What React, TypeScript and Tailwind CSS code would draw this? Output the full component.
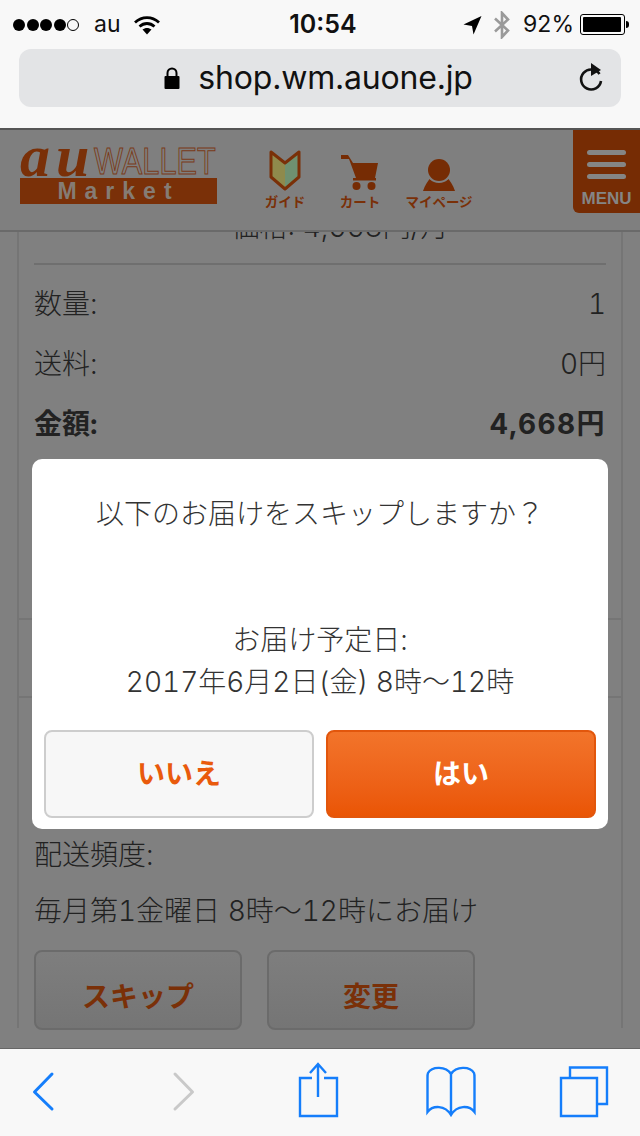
const jp = "font-['Inter','Noto_Sans_CJK_JP',sans-serif] font-light tabular-nums";

const StatusBar = () => (
  <div className="h-[48px] flex items-center justify-between pl-[13px] pr-[11px] pt-[1px] font-['Inter',sans-serif] text-[#111] text-[23px]">
    <div className="flex items-center w-[200px]">
      <div className="flex gap-[1.5px] items-center">
        <span className="w-[12px] h-[12px] rounded-full bg-black" />
        <span className="w-[12px] h-[12px] rounded-full bg-black" />
        <span className="w-[12px] h-[12px] rounded-full bg-black" />
        <span className="w-[12px] h-[12px] rounded-full bg-black" />
        <span className="w-[12px] h-[12px] rounded-full border border-black" />
      </div>
      <span className="ml-[15px]">au</span>
      <svg width="28" height="22" viewBox="0 0 28 22" className="ml-[12px]">
        <path d="M2 8.5 C9 2 19 2 26 8.5" fill="none" stroke="#000" strokeWidth="2.8" />
        <path d="M6.5 12.5 C11 8.5 17 8.5 21.5 12.5" fill="none" stroke="#000" strokeWidth="2.8" />
        <path d="M9.5 15.5 C12 13.4 16 13.4 18.5 15.5 L14 20.5 Z" fill="#000" />
      </svg>
    </div>
    <span className="font-semibold text-[25px] ml-[4px]">10:54</span>
    <div className="flex items-center justify-end w-[200px]">
      <svg width="19" height="20" viewBox="0 0 19 20">
        <path d="M18.5 1 L0.5 9.5 L9 11 L10.5 19.5 Z" fill="#000" />
      </svg>
      <svg width="18" height="28" viewBox="0 0 18 28" className="ml-[11px]">
        <path d="M2 7.5 L15 19.5 L9 26 V2 L15 8.5 L2 20.5" fill="none" stroke="#9a9a9a" strokeWidth="2.6" />
      </svg>
      <span className="ml-[12px]">92%</span>
      <div className="ml-[6px] w-[45px] h-[21px] rounded-[3px] border border-black p-[2px]">
        <div className="h-full w-[38px] bg-black rounded-[1px]" />
      </div>
      <span className="ml-[1px] w-[3px] h-[7px] bg-black rounded-r-sm" />
    </div>
  </div>
);

const UrlBar = () => (
  <div className="h-[80px] pt-[1px] px-[19px]">
    <div className="relative h-[58px] rounded-[12px] bg-[#e3e4e6] flex items-center justify-center">
      <div className="flex items-center gap-[18px] -ml-[3px] font-['Inter',sans-serif] text-[32px] text-[#111]">
        <svg width="16" height="22" viewBox="0 0 16 22">
          <path d="M3.5 9 V6 a4.5 4.5 0 0 1 9 0 V9" fill="none" stroke="#000" strokeWidth="2" />
          <rect x="0.5" y="9" width="15" height="13" rx="1" fill="#000" />
        </svg>
        <span className="tracking-[-0.2px]">shop.wm.auone.jp</span>
      </div>
      <svg width="28" height="32" viewBox="0 0 28 32" className="absolute right-[16px] top-[13px]">
        <path d="M22.5 11 A10 10 0 1 0 24 18" fill="none" stroke="#111" strokeWidth="2.6" transform="translate(0 1)" />
        <path d="M14 1 L24 8 L14 14 Z" fill="#111" />
      </svg>
    </div>
  </div>
);

const BeginnerMark = () => (
  <svg width="32" height="42" viewBox="0 0 32 42">
    <defs>
      <linearGradient id="mark" x1="0" x2="1" y1="0" y2="0">
        <stop offset="0" stopColor="#8f8a4c" />
        <stop offset="0.5" stopColor="#8f8a4c" />
        <stop offset="0.5" stopColor="#6f9070" />
        <stop offset="1" stopColor="#6f9070" />
      </linearGradient>
    </defs>
    <path d="M2 3 L16 14 L30 3 V28 L16 40 L2 28 Z" fill="url(#mark)" stroke="#7a3008" strokeWidth="3" strokeLinejoin="round" />
  </svg>
);

const CartIcon = () => (
  <svg width="38" height="36" viewBox="0 0 38 36">
    <path d="M0 0 H7 L12 8 H37 L34 23 H15 L8 4 H0 Z" fill="#762c04" />
    <rect x="12" y="23" width="23" height="2.5" fill="#762c04" />
    <circle cx="15.5" cy="31" r="4" fill="#762c04" />
    <circle cx="30.5" cy="31" r="4" fill="#762c04" />
  </svg>
);

const PersonIcon = () => (
  <svg width="32" height="32" viewBox="0 0 32 32">
    <path d="M0 32 C2 26 5 21 9 18 H23 C27 21 30 26 32 32 Z" fill="#762c04" />
    <circle cx="16" cy="11" r="13" fill="#808080" />
    <circle cx="16" cy="11" r="11" fill="#762c04" />
  </svg>
);

const NavItem = ({ icon, label, className }: { icon: React.ReactNode; label: string; className: string }) => (
  <div className={`flex flex-col items-center pt-[19px] ${className}`}>
    <div className="h-[42px] flex items-end justify-center">{icon}</div>
    <span className="mt-[3px] text-[13.5px] leading-[14px] font-bold whitespace-nowrap text-[#7a3008] font-['Noto_Sans_CJK_JP',sans-serif]">{label}</span>
  </div>
);

const SiteHeader = () => (
  <div className="relative h-[104px] shrink-0 bg-[#7f7f7f] border-t-2 border-b-2 border-t-[#555] border-b-[#6a6a6a] flex pl-[20px]">
    <div className="w-[197px] pt-[18px] flex flex-col">
      <div className="flex items-end h-[27px]">
        <span className="w-[74px] -translate-y-[5px] font-['Liberation_Serif',serif] italic font-bold text-[60px] leading-[27px] tracking-[6px] text-[#7a3008]">au</span>
        <span className="w-[123px] whitespace-nowrap font-['Liberation_Sans',sans-serif] text-[37px] leading-[27px] text-transparent [-webkit-text-stroke:1px_#7a3a18] scale-x-[0.83] origin-left">WALLET</span>
      </div>
      <div className="mt-[3px] h-[26px] bg-[#7a3008] flex items-center justify-center font-['Liberation_Sans',sans-serif] font-bold text-[#857c74] text-[23px] tracking-[8px]">Market</div>
    </div>
    <NavItem icon={<BeginnerMark />} label="ガイド" className="ml-[48px] w-[40px]" />
    <NavItem icon={<CartIcon />} label="カート" className="ml-[35px] w-[40px]" />
    <NavItem icon={<PersonIcon />} label="マイページ" className="ml-[28px] w-[62px]" />
    <div className="absolute right-0 top-[0px] w-[67px] h-[83px] bg-[#762c04] rounded-bl-[6px] flex flex-col items-center pt-[20px]">
      <span className="w-[39px] h-[5px] rounded-full bg-[#858585]" />
      <span className="mt-[7px] w-[39px] h-[5px] rounded-full bg-[#858585]" />
      <span className="mt-[7px] w-[39px] h-[5px] rounded-full bg-[#858585]" />
      <span className="mt-[8px] text-[17px] leading-[24px] font-bold text-[#858585] font-['Liberation_Sans',sans-serif]">MENU</span>
    </div>
  </div>
);

const PriceRow = ({ label, value, bold }: { label: string; value: string; bold?: boolean }) => (
  <div className={`h-[60px] flex items-center justify-between text-[28px] text-[#222] ${bold ? "font-bold" : ""}`}>
    <span>{label}</span>
    <span className={bold ? "tracking-[1.4px]" : ""}>{value}</span>
  </div>
);

const Content = () => (
  <div className={`flex-1 overflow-hidden bg-[#808080] px-[17px] ${jp}`}>
    <div className="h-full border-x-2 border-[#757575] px-[15px] text-[#222]">
      <div className="-mt-[20px] h-[53px] pl-[40px] border-b-2 border-[#6f6f6f] text-center text-[28px] leading-[30px] whitespace-nowrap">価格: 4,668円/月</div>
      <div className="pt-[9px]">
        <PriceRow label="数量:" value="1" />
        <PriceRow label="送料:" value="0円" />
        <PriceRow label="金額:" value="4,668円" bold />
      </div>
      <div className="-mx-[15px] mt-[164px] h-[80px] border-y-2 border-[#757575]" />
      <div className="pt-[139px] text-[28px] leading-[36px]">配送頻度:</div>
      <div className="mt-[20px] text-[28px] leading-[36px] whitespace-nowrap">毎月第1金曜日 8時〜12時にお届け</div>
      <div className="mt-[21px] flex gap-[25px]">
        <button className="w-[208px] h-[80px] pt-[14px] rounded-[8px] border-2 border-[#6b6b6b] bg-gradient-to-b from-[#7e7e7e] to-[#757575] text-[#7a3008] text-[28px] font-bold">スキップ</button>
        <button className="w-[208px] h-[80px] pt-[14px] rounded-[8px] border-2 border-[#6b6b6b] bg-gradient-to-b from-[#7e7e7e] to-[#757575] text-[#7a3008] text-[28px] font-bold">変更</button>
      </div>
    </div>
  </div>
);

const SkipModal = () => (
  <div className={`absolute left-[32px] top-[459px] w-[576px] h-[370px] bg-white rounded-[10px] px-[12px] flex flex-col text-center text-[#333] ${jp}`}>
    <p className="mt-[36px] text-[28px] leading-[38px]">以下のお届けをスキップしますか？</p>
    <p className="mt-[86px] text-[28px] leading-[42px]">お届け予定日:</p>
    <p className="text-[28px] leading-[42px] whitespace-nowrap">2017年6月2日(金) 8時〜12時</p>
    <div className="mt-[27px] flex gap-[12px]">
      <button className="flex-1 h-[88px] rounded-[8px] border-2 border-[#cdcdcd] bg-[#f7f7f7] text-[#e95a0c] text-[28px] font-bold">いいえ</button>
      <button className="flex-1 h-[88px] rounded-[8px] border-2 border-[#e2560c] bg-gradient-to-b from-[#f2742a] to-[#ea5504] text-white text-[28px] font-bold">はい</button>
    </div>
  </div>
);

const Toolbar = () => (
  <div className="h-[88px] shrink-0 bg-[#f8f8f8] border-t border-t-[#666] flex items-center">
    <svg width="640" height="87" viewBox="0 0 640 87" fill="none" strokeWidth="2.4">
      <path d="M52 25 L34.5 43 L52 60" stroke="#157efb" strokeWidth="3" strokeLinecap="round" strokeLinejoin="round" />
      <path d="M175 25 L192.5 43 L175 60" stroke="#c9c9c9" strokeWidth="3" strokeLinecap="round" strokeLinejoin="round" />
      <g stroke="#157efb">
        <path d="M312 29 H300 V67 H337 V29 H324" />
        <path d="M318 15 V48 M310 24 L318 15 L326 24" />
        <path d="M451 25 C446 17 432 17 428 24 C427.5 25 427.5 27 427.5 29 V63 C433 56 445 56 451 66 C457 56 469 56 474.5 63 V29 C474.5 27 474.5 25 474 24 C470 17 456 17 451 25 Z M451 25 V66" />
        <path d="M561 29 H597 V67 H561 Z" />
        <path d="M570 29 V18.5 H607 V55 H597" />
      </g>
    </svg>
  </div>
);

export default function App() {
  return (
    <div className="relative w-[640px] h-[1136px] overflow-hidden bg-[#f8f8f8] flex flex-col">
      <StatusBar />
      <UrlBar />
      <SiteHeader />
      <Content />
      <Toolbar />
      <SkipModal />
    </div>
  );
}
